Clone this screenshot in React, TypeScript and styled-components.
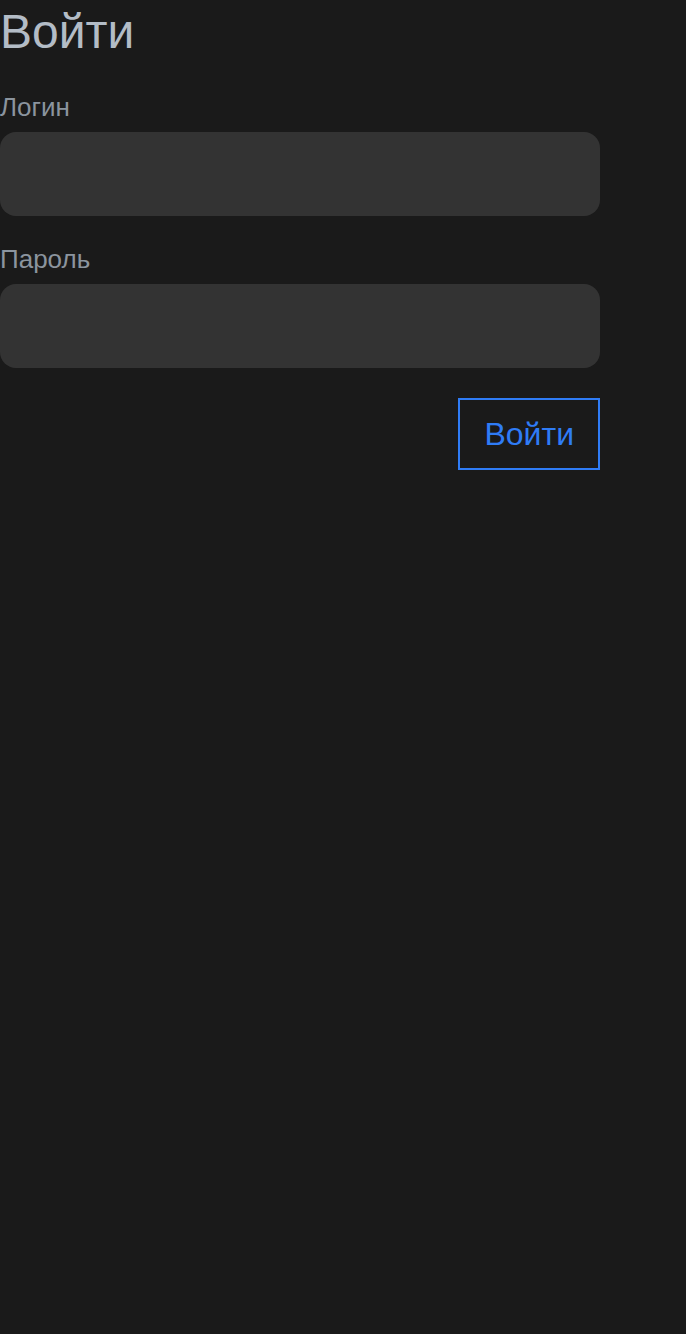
import styled, { createGlobalStyle } from "styled-components";

const GlobalStyle = createGlobalStyle`
  html, body {
    margin: 0;
    padding: 0;
    background: #1a1a1a;
    font-family: "Liberation Sans", Arial, sans-serif;
  }
`;

const Form = styled.form`
  width: 600px;
  display: flex;
  flex-direction: column;
`;

const Title = styled.h1`
  margin: 0 0 35px;
  padding-top: 4px;
  font-size: 48px;
  font-weight: 400;
  line-height: 1.15;
  color: #b3bcc6;
`;

const Field = styled.label`
  display: flex;
  flex-direction: column;
  gap: 12px;
  margin-bottom: 30px;
`;

const LabelText = styled.span`
  font-size: 26px;
  line-height: 26px;
  color: #8b949e;
`;

const Input = styled.input`
  box-sizing: border-box;
  width: 100%;
  height: 84px;
  border: none;
  border-radius: 16px;
  background: #333333;
  color: #d0d0d0;
  font: inherit;
  font-size: 24px;
  padding: 0 20px;
  outline: none;
`;

const Actions = styled.div`
  display: flex;
  justify-content: flex-end;
`;

const Submit = styled.button`
  box-sizing: border-box;
  height: 72px;
  padding: 0 24px;
  background: transparent;
  border: 2px solid #2f7cf6;
  color: #2f7cf6;
  font-family: inherit;
  font-size: 32px;
  cursor: pointer;
`;

export default function App() {
  return (
    <>
      <GlobalStyle />
      <Form onSubmit={(e) => e.preventDefault()}>
        <Title>Войти</Title>
        <Field>
          <LabelText>Логин</LabelText>
          <Input type="text" />
        </Field>
        <Field>
          <LabelText>Пароль</LabelText>
          <Input type="password" />
        </Field>
        <Actions>
          <Submit type="submit">Войти</Submit>
        </Actions>
      </Form>
    </>
  );
}
